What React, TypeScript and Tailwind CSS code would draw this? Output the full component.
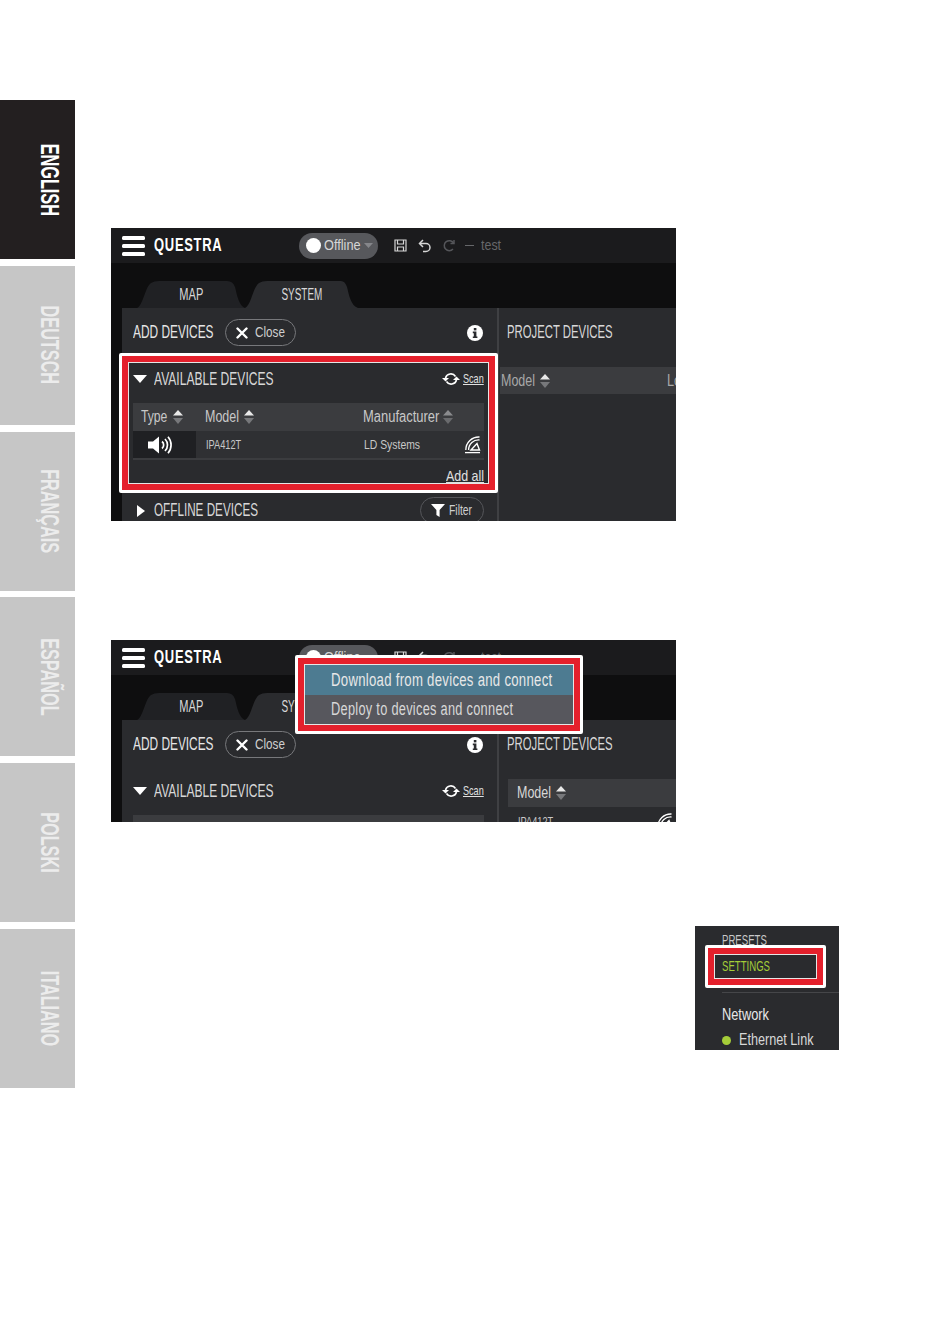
import React from "react";

const font = "font-['Liberation_Sans',Arial,sans-serif]";

function N({ w, s, className = "", children }: { w: string; s: string; className?: string; children: React.ReactNode }) {
  return (
    <span className={`inline-block shrink-0 whitespace-nowrap ${w} ${className}`}>
      <span className={`inline-block origin-left ${s}`}>{children}</span>
    </span>
  );
}

function SortArrows({ dim = false }: { dim?: boolean }) {
  return (
    <svg width="10" height="14" viewBox="0 0 10 14" className="shrink-0">
      <path d="M5 0 L10 5.5 H0 Z" fill={dim ? "#8a8b8e" : "#e8e8e8"} />
      <path d="M5 14 L10 8 H0 Z" fill={dim ? "#6a6b6e" : "#77787b"} />
    </svg>
  );
}

function Hamburger() {
  return (
    <svg width="23" height="20" viewBox="0 0 23 20" className="shrink-0">
      <rect x="0" y="0" width="23" height="4" rx="1.5" fill="#fff" />
      <rect x="0" y="8" width="23" height="4" rx="1.5" fill="#fff" />
      <rect x="0" y="16" width="23" height="4" rx="1.5" fill="#fff" />
    </svg>
  );
}

function SaveIcon() {
  return (
    <svg width="13" height="13" viewBox="0 0 13 13" fill="none" stroke="#d6d6d6" strokeWidth="1.2" className="shrink-0">
      <path d="M1 1 H12 V12 H1 Z" />
      <path d="M3.5 1 V5 H9.5 V1" />
      <path d="M3.5 12 V8 H9.5 V12" />
    </svg>
  );
}

function UndoIcon({ redo = false }: { redo?: boolean }) {
  return (
    <svg width="13" height="14" viewBox="0 0 13 14" fill="none" stroke={redo ? "#55565a" : "#d6d6d6"} strokeWidth="1.5" className="shrink-0">
      {redo ? (
        <g>
          <path d="M10.5 4 A5 5 0 1 0 10 10" />
          <path d="M11 1 V4.5 H7.5" />
        </g>
      ) : (
        <g>
          <path d="M2 4.5 H8 A4 4 0 0 1 8 12.5 H5" />
          <path d="M5 1 L1.5 4.5 L5 8" />
        </g>
      )}
    </svg>
  );
}

function CloseIcon() {
  return (
    <svg width="12" height="12" viewBox="0 0 12 12" className="shrink-0">
      <path d="M1.5 1.5 L10.5 10.5 M10.5 1.5 L1.5 10.5" stroke="#fff" strokeWidth="2.4" strokeLinecap="round" />
    </svg>
  );
}

function InfoIcon() {
  return (
    <svg width="16" height="16" viewBox="0 0 16 16" className="shrink-0">
      <circle cx="8" cy="8" r="8" fill="#fff" />
      <rect x="6.8" y="3" width="2.6" height="2.4" fill="#2a2b2e" />
      <path d="M5.8 6.6 H9.4 V11.4 H10.4 V13 H5.8 V11.4 H6.8 V8.2 H5.8 Z" fill="#2a2b2e" />
    </svg>
  );
}

function ScanIcon() {
  return (
    <svg width="18" height="14" viewBox="0 0 18 14" fill="none" className="shrink-0">
      <path d="M3.5 6 A5.5 5.5 0 0 1 13.5 4.5" stroke="#fff" strokeWidth="1.6" />
      <path d="M14.5 8 A5.5 5.5 0 0 1 4.5 9.5" stroke="#fff" strokeWidth="1.6" />
      <path d="M0 6 H7 L3.5 9.5 Z" fill="#fff" />
      <path d="M11 8 H18 L14.5 4.5 Z" fill="#fff" />
    </svg>
  );
}

function SpeakerIcon() {
  return (
    <svg width="24" height="18" viewBox="0 0 24 18" fill="none" className="shrink-0">
      <path d="M0 5.5 H5 L11 0.5 V17.5 L5 12.5 H0 Z" fill="#fff" />
      <path d="M14 5.5 A4.5 4.5 0 0 1 14 12.5" stroke="#fff" strokeWidth="1.7" />
      <path d="M17 3 A8.5 8.5 0 0 1 17 15" stroke="#fff" strokeWidth="1.7" />
      <path d="M20 0.8 A12.5 12.5 0 0 1 20 17.2" stroke="#fff" strokeWidth="1.7" />
    </svg>
  );
}

function DeviceIcon() {
  return (
    <svg width="16" height="18" viewBox="0 0 16 18" fill="none" stroke="#fff" className="shrink-0">
      <path d="M0.8 14 A13 13 0 0 1 14.5 1" strokeWidth="1.3" />
      <path d="M3.6 14 A10 10 0 0 1 14.5 4" strokeWidth="1.3" />
      <path d="M6 14 L12 7.5 L14.5 14 Z" strokeWidth="1.4" />
      <path d="M0 16.6 H15" strokeWidth="1.3" />
    </svg>
  );
}

function FilterIcon() {
  return (
    <svg width="14" height="13" viewBox="0 0 14 13" className="shrink-0">
      <path d="M0 0 H14 L8.6 6 V13 L5.4 11 V6 Z" fill="#fff" />
    </svg>
  );
}

function TriangleDown() {
  return (
    <svg width="14" height="8" viewBox="0 0 14 8" className="shrink-0">
      <path d="M0 0 H14 L7 8 Z" fill="#fff" />
    </svg>
  );
}

function TriangleRight() {
  return (
    <svg width="8" height="12" viewBox="0 0 8 12" className="shrink-0">
      <path d="M0 0 L8 6 L0 12 Z" fill="#fff" />
    </svg>
  );
}

function TopBar() {
  return (
    <div className="h-[35px] flex items-center pl-[11px] bg-[#1b1b1d]">
      <Hamburger />
      <N w="w-[145px]" s="scale-x-[.72]" className="ml-[9px] text-[18px] font-bold tracking-[1px] text-white">QUESTRA</N>
      <div className="w-[79px] h-[26px] rounded-full bg-[#57585c] flex items-center pl-[7px] shrink-0">
        <span className="w-[15px] h-[15px] rounded-full bg-white shrink-0" />
        <N w="w-[40px]" s="scale-x-[.85]" className="ml-[3px] text-[15px] text-[#d6d6d6]">Offline</N>
        <svg width="9" height="5" viewBox="0 0 9 5" className="shrink-0"><path d="M0 0 H9 L4.5 5 Z" fill="#85868a" /></svg>
      </div>
      <div className="ml-[16px] flex items-center">
        <SaveIcon />
        <span className="ml-[11px]"><UndoIcon /></span>
        <span className="ml-[12px]"><UndoIcon redo /></span>
        <span className="ml-[9px] w-[9px] h-px bg-[#66676a]" />
        <N w="w-[20px]" s="scale-x-[.83]" className="ml-[7px] text-[15px] text-[#66676a]">test</N>
      </div>
    </div>
  );
}

function TabStrip() {
  return (
    <div className="h-[45px] bg-[#0e0e0f] flex items-end pl-[26px]">
      <div className="relative w-[108px] h-[27px] flex items-center justify-center">
        <svg width="108" height="27" viewBox="0 0 108 27" className="absolute inset-0">
          <path d="M0 27 C6 25 8 6 14 2 Q17 0 22 0 H90 Q96 0 98 6 C100 14 102 25 108 27 Z" fill="#202124" />
        </svg>
        <span className="relative text-[16px] text-[#d8d8d8] scale-x-[.69]">MAP</span>
      </div>
      <div className="relative w-[113px] h-[27px] flex items-center justify-center">
        <svg width="113" height="27" viewBox="0 0 113 27" className="absolute inset-0">
          <path d="M0 27 C6 25 8 6 14 2 Q17 0 22 0 H96 Q100 0 102 6 C104 14 106 25 113 27 Z" fill="#2a2b2e" />
        </svg>
        <span className="relative text-[16px] text-[#d8d8d8] scale-x-[.62]">SYSTEM</span>
      </div>
    </div>
  );
}

function AddDevicesRow() {
  return (
    <div className="mt-[11px] h-[27px] flex items-center">
      <N w="w-[92px]" s="scale-x-[.66]" className="text-[18px] text-[#e6e6e6]">ADD DEVICES</N>
      <div className="w-[71px] h-[27px] rounded-full border border-[#77787b] flex items-center pl-[10px]">
        <CloseIcon />
        <N w="w-[30px]" s="scale-x-[.78]" className="ml-[7px] text-[15px] text-[#cfcfcf]">Close</N>
      </div>
      <div className="ml-auto mr-[1px]"><InfoIcon /></div>
    </div>
  );
}

function AvailableTitle() {
  return (
    <div className="mt-[19px] h-[28px] flex items-center">
      <TriangleDown />
      <N w="w-[120px]" s="scale-x-[.67]" className="ml-[7px] text-[18px] text-[#d8d8d8]">AVAILABLE DEVICES</N>
      <div className="ml-auto flex items-center gap-[3px]">
        <ScanIcon />
        <N w="w-[21px]" s="scale-x-[.7] underline" className="text-[13px] text-[#e0e0e0]">Scan</N>
      </div>
    </div>
  );
}

function TableHead() {
  return (
    <div className="mt-[10px] h-[28px] bg-[#3b3c3f] flex items-center pl-[8px] text-[16px] text-[#c8c8c8]">
      <div className="w-[64px] flex items-center gap-[5px]"><N w="w-[27px]" s="scale-x-[.76]">Type</N><SortArrows /></div>
      <div className="w-[158px] flex items-center gap-[4px]"><N w="w-[35px]" s="scale-x-[.78]">Model</N><SortArrows /></div>
      <div className="flex items-center gap-[4px]"><N w="w-[76px]" s="scale-x-[.81]">Manufacturer</N><SortArrows dim /></div>
    </div>
  );
}

function DeviceRow() {
  return (
    <div className="h-[29px] border-b-2 border-[#3b3c3f] bg-[#2f3033] flex items-center text-[13px] text-[#c8c8c8]">
      <div className="w-[63px] h-full bg-[#1f2023] flex items-center pl-[15px] shrink-0"><SpeakerIcon /></div>
      <N w="w-[158px]" s="scale-x-[.71]" className="ml-[10px]">IPA412T</N>
      <N w="w-[56px]" s="scale-x-[.8]">LD Systems</N>
      <span className="ml-auto mr-[3px]"><DeviceIcon /></span>
    </div>
  );
}

function OfflineRow() {
  return (
    <div className="mt-[3px] h-[27px] flex items-center pl-[4px]">
      <TriangleRight />
      <N w="w-[104px]" s="scale-x-[.65]" className="ml-[9px] text-[18px] text-[#d8d8d8]">OFFLINE DEVICES</N>
      <div className="ml-auto w-[64px] h-[27px] rounded-full border border-[#55565a] flex items-center pl-[10px]">
        <FilterIcon />
        <N w="w-[23px]" s="scale-x-[.74]" className="ml-[4px] text-[14px] text-[#cfcfcf]">Filter</N>
      </div>
    </div>
  );
}

function Highlight({ className, children }: { className: string; children?: React.ReactNode }) {
  return (
    <div className={`absolute border-[3px] border-white rounded-[2px] ${className}`}>
      <div className="w-full h-full border-[6px] border-[#e4202c]">
        <div className="w-full h-full border border-[#e6e6e6] overflow-hidden">{children}</div>
      </div>
    </div>
  );
}

function ScreenOne() {
  return (
    <div className="relative h-[293px] w-[565px] overflow-hidden bg-[#0e0e0f]">
      <TopBar />
      <TabStrip />
      <div className="ml-[11px] h-[213px] bg-[#2a2b2e] flex">
        <div className="w-[377px] shrink-0 pl-[11px] pr-[13px] border-r-2 border-[#3f4043]">
          <AddDevicesRow />
          <AvailableTitle />
          <TableHead />
          <DeviceRow />
          <div className="h-[34px] flex items-end justify-end pb-[7px] text-[15px] text-[#e0e0e0]">
            <N w="w-[38px]" s="scale-x-[.83] underline">Add all</N>
          </div>
          <OfflineRow />
        </div>
        <div className="flex-1 min-w-0 overflow-hidden">
          <div className="mt-[11px] ml-[8px] h-[27px] flex items-center">
            <N w="w-[106px]" s="scale-x-[.63]" className="text-[18px] text-[#d8d8d8]">PROJECT DEVICES</N>
          </div>
          <div className="mt-[21px] ml-[1px] h-[27px] bg-[#3b3c3f] flex items-center text-[16px] text-[#a8a8a8] gap-[4px] pl-[1px]">
            <N w="w-[35px]" s="scale-x-[.78]">Model</N>
            <SortArrows />
            <N w="w-[9px]" s="scale-x-[.8]" className="ml-[113px]">Lo</N>
          </div>
        </div>
      </div>
      <Highlight className="left-[8px] top-[125px] w-[379px] h-[140px]" />
    </div>
  );
}

function ScreenTwo() {
  return (
    <div className="relative h-[182px] w-[565px] overflow-hidden bg-[#0e0e0f]">
      <TopBar />
      <TabStrip />
      <div className="ml-[11px] h-[102px] bg-[#2a2b2e] flex">
        <div className="w-[377px] shrink-0 pl-[11px] pr-[13px] border-r-2 border-[#3f4043]">
          <AddDevicesRow />
          <AvailableTitle />
          <TableHead />
        </div>
        <div className="flex-1 min-w-0 overflow-hidden">
          <div className="mt-[11px] ml-[8px] h-[27px] flex items-center">
            <N w="w-[106px]" s="scale-x-[.63]" className="text-[18px] text-[#d8d8d8]">PROJECT DEVICES</N>
          </div>
          <div className="mt-[21px] ml-[9px] h-[28px] bg-[#3b3c3f] flex items-center text-[16px] text-[#d8d8d8] gap-[4px] pl-[9px]">
            <N w="w-[35px]" s="scale-x-[.78]">Model</N>
            <SortArrows />
          </div>
          <div className="ml-[19px] mt-[5px] flex items-center text-[13px] text-[#c8c8c8]">
            <N w="w-[36px]" s="scale-x-[.71]">IPA412T</N>
            <span className="ml-auto mr-[3px]"><DeviceIcon /></span>
          </div>
        </div>
      </div>
      <Highlight className="left-[184px] top-[15px] w-[288px] h-[79px]">
        <div className="h-[30px] bg-[#4d7b91] flex items-center pl-[26px] text-[18px] tracking-[0.4px] text-[#e8e8e8]">
          <N w="w-[221px]" s="scale-x-[.73]">Download from devices and connect</N>
        </div>
        <div className="h-[29px] bg-[#57575d] flex items-center pl-[26px] text-[18px] tracking-[0.4px] text-[#d8d8d8]">
          <N w="w-[185px]" s="scale-x-[.71]">Deploy to devices and connect</N>
        </div>
      </Highlight>
    </div>
  );
}

function ScreenThree() {
  return (
    <div className="relative h-[124px] w-[144px] overflow-hidden bg-[#2a2b2e]">
      <div className="pl-[27px] pt-[6px] text-[15px] leading-[16px] text-[#c8c8c8]">
        <N w="w-[45px]" s="scale-x-[.64]">PRESETS</N>
      </div>
      <div className="mt-[44px] ml-[27px] h-px bg-[#454649]" />
      <div className="pl-[27px] mt-[13px] text-[16px] leading-[18px] text-[#e8e8e8]">
        <N w="w-[47px]" s="scale-x-[.8]">Network</N>
      </div>
      <div className="pl-[27px] mt-[7px] flex items-center text-[16px] leading-[18px] text-[#d8d8d8]">
        <span className="w-[9px] h-[9px] rounded-full bg-[#a5cd39] shrink-0" />
        <N w="w-[74px]" s="scale-x-[.79]" className="ml-[8px]">Ethernet Link</N>
      </div>
      <Highlight className="left-[10px] top-[19px] w-[121px] h-[43px]">
        <div className="h-full bg-[#2a2b2e] flex items-center pl-[7px] text-[15px] text-[#a5cd39]">
          <N w="w-[48px]" s="scale-x-[.64]">SETTINGS</N>
        </div>
      </Highlight>
    </div>
  );
}

function LangTab({ label, active = false }: { label: string; active?: boolean }) {
  return (
    <div className={`h-[159px] w-[75px] flex items-center justify-end pr-[12px] ${active ? "bg-[#231f20]" : "bg-[#c6c6c6]"}`}>
      <span className={`[writing-mode:vertical-rl] scale-y-[.625] text-[26px] font-bold leading-none ${active ? "text-white" : "text-[#ececec]"}`}>{label}</span>
    </div>
  );
}

export default function App() {
  return (
    <div className={`w-[950px] h-[1318px] bg-white flex overflow-hidden ${font}`}>
      <aside className="w-[75px] shrink-0 pt-[100px] flex flex-col gap-[6.8px]">
        {["ENGLISH", "DEUTSCH", "FRANÇAIS", "ESPAÑOL", "POLSKI", "ITALIANO"].map((l, i) => (
          <LangTab key={l} label={l} active={i === 0} />
        ))}
      </aside>
      <main className="flex-1 pl-[36px] pt-[228px]">
        <ScreenOne />
        <div className="mt-[119px]"><ScreenTwo /></div>
        <div className="mt-[104px] ml-[584px]"><ScreenThree /></div>
      </main>
    </div>
  );
}
